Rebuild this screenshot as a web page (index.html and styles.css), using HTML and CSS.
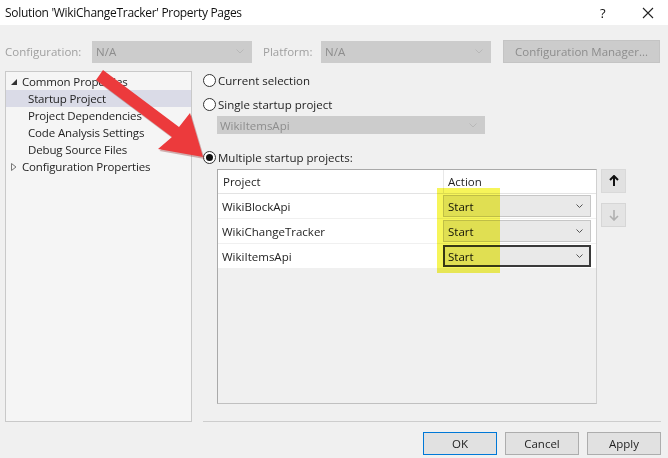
FILE: index.html
```html
<!DOCTYPE html>
<html>
<head>
<meta charset="utf-8">
<link rel="stylesheet" href="styles.css">
</head>
<body>
<div class="window">
  <div class="titlebar">
    <span class="title">Solution 'WikiChangeTracker' Property Pages</span>
    <span class="help">?</span>
    <span class="close"><svg width="12" height="12" viewBox="0 0 12 12"><path d="M1 1 L11 11 M11 1 L1 11" stroke="#222" stroke-width="1.1" fill="none"/></svg></span>
  </div>

  <div class="configrow">
    <span class="lbl lbl-config">Configuration:</span>
    <div class="combo combo-dis combo-config"><span>N/A</span><svg class="chev" width="8" height="5" viewBox="0 0 8 5"><path d="M0.5 0.5 L4 4 L7.5 0.5" stroke="#b8b8b8" fill="none"/></svg></div>
    <span class="lbl lbl-platform">Platform:</span>
    <div class="combo combo-dis combo-platform"><span>N/A</span><svg class="chev" width="8" height="5" viewBox="0 0 8 5"><path d="M0.5 0.5 L4 4 L7.5 0.5" stroke="#b8b8b8" fill="none"/></svg></div>
    <div class="btn-dis cfgmgr">Configuration Manager...</div>
  </div>

  <div class="main">
    <div class="tree">
      <div class="node"><svg class="tri" width="6" height="6" viewBox="0 0 6 6"><path d="M6 0 L6 6 L0 6 Z" fill="#333"/></svg><span>Common Properties</span></div>
      <div class="node child selected"><span>Startup Project</span></div>
      <div class="node child"><span>Project Dependencies</span></div>
      <div class="node child"><span>Code Analysis Settings</span></div>
      <div class="node child"><span>Debug Source Files</span></div>
      <div class="node"><svg class="tri" width="6" height="8" viewBox="0 0 6 8"><path d="M0.5 0.5 L5 4 L0.5 7.5 Z" fill="none" stroke="#777"/></svg><span>Configuration Properties</span></div>
    </div>

    <div class="content">
      <div class="radio-row r1"><span class="radio"></span><span>Current selection</span></div>
      <div class="radio-row r2"><span class="radio"></span><span>Single startup project</span></div>
      <div class="combo combo-dis combo-single"><span>WikiItemsApi</span><svg class="chev" width="8" height="5" viewBox="0 0 8 5"><path d="M0.5 0.5 L4 4 L7.5 0.5" stroke="#b8b8b8" fill="none"/></svg></div>
      <div class="radio-row r3"><span class="radio checked"></span><span>Multiple startup projects:</span></div>

      <div class="tablearea">
        <div class="grid">
          <div class="grow head">
            <div class="c1">Project</div>
            <div class="c2">Action</div>
          </div>
          <div class="grow">
            <div class="c1">WikiBlockApi</div>
            <div class="c2"><div class="acombo"><span>Start</span><svg class="chev" width="7" height="5" viewBox="0 0 7 5"><path d="M0.5 0.5 L3.5 3.5 L6.5 0.5" stroke="#555" fill="none"/></svg></div></div>
          </div>
          <div class="grow">
            <div class="c1">WikiChangeTracker</div>
            <div class="c2"><div class="acombo"><span>Start</span><svg class="chev" width="7" height="5" viewBox="0 0 7 5"><path d="M0.5 0.5 L3.5 3.5 L6.5 0.5" stroke="#555" fill="none"/></svg></div></div>
          </div>
          <div class="grow">
            <div class="c1">WikiItemsApi</div>
            <div class="c2"><div class="acombo focus"><span>Start</span><svg class="chev" width="7" height="5" viewBox="0 0 7 5"><path d="M0.5 0.5 L3.5 3.5 L6.5 0.5" stroke="#555" fill="none"/></svg></div></div>
          </div>
          <div class="highlight"></div>
        </div>
        <div class="movebtns">
          <div class="mbtn"><svg width="10" height="12" viewBox="0 0 10 12"><path d="M5 1 L5 11 M1 5 L5 1 L9 5" stroke="#111" stroke-width="2" fill="none"/></svg></div>
          <div class="mbtn dis"><svg width="10" height="12" viewBox="0 0 10 12"><path d="M5 1 L5 11 M1 7 L5 11 L9 7" stroke="#b0b0b0" stroke-width="1.6" fill="none"/></svg></div>
        </div>
      </div>
    </div>
  </div>

  <div class="footer">
    <div class="sep"></div>
    <div class="buttons">
      <div class="btn default">OK</div>
      <div class="btn">Cancel</div>
      <div class="btn">Apply</div>
    </div>
  </div>

  <svg class="arrow" width="668" height="458" viewBox="0 0 668 458">
    <g transform="translate(1.5,2)" fill="#8a2a2a" opacity="0.35">
      <path d="M96 80 L103 70 L179 127 L190 113 L203 157 L158 149 L172 137 Z"/>
    </g>
    <path d="M96 80 L103 70 L179 127 L190 113 L203 157 L158 149 L172 137 Z" fill="#ec3a3c"/>
  </svg>
</div>
</body>
</html>
```

FILE: styles.css
```css
* { box-sizing: border-box; }
html, body { margin: 0; padding: 0; }
body {
  width: 668px;
  height: 458px;
  overflow: hidden;
  background: #f0f0f0;
  font-family: "Open Sans", "Noto Sans", sans-serif;
  font-size: 11.5px;
  color: #1e1e1e;
}
.window { position: relative; width: 668px; height: 458px; }

.titlebar {
  height: 25px;
  background: #ffffff;
  display: flex;
  align-items: center;
  padding-left: 5px;
  font-size: 12px;
  color: #111;
}
.title { flex: 1; letter-spacing: -0.3px; }
.help { width: 20px; font-size: 13px; margin-right: 22px; }
.close { width: 26px; display: flex; align-items: center; }

.configrow {
  margin-top: 15px;
  height: 23px;
  display: flex;
  align-items: center;
  padding-left: 5px;
  color: #a0a0a0;
}
.lbl-config { width: 87px; }
.lbl-platform { width: 58px; margin-left: 11px; }
.combo {
  height: 22px;
  display: flex;
  align-items: center;
  justify-content: space-between;
  padding: 0 8px 0 4px;
}
.combo-dis { background: #cccccc; color: #8d8d8d; }
.combo-config { width: 160px; }
.combo-platform { width: 170px; }
.btn-dis.cfgmgr {
  margin-left: 12px;
  width: 157px;
  height: 23px;
  background: #cccccc;
  color: #8d8d8d;
  display: flex;
  align-items: center;
  justify-content: center;
  border: 1px solid #c4c4c4;
}

.main {
  margin-top: 8px;
  display: flex;
  padding-left: 5px;
}
.tree {
  width: 187px;
  height: 351px;
  background: #f5f5f5;
  border: 1px solid #c9c9c9;
  padding-top: 1px;
  letter-spacing: -0.15px;
}
.node {
  height: 17px;
  display: flex;
  align-items: center;
  padding-left: 4px;
  white-space: nowrap;
  overflow: hidden;
}
.node .tri { width: 8px; margin-right: 4px; }
.node.child { padding-left: 22px; }
.node.selected { background: #dadbe7; }

.content {
  margin-left: 11px;
  width: 458px;
}
.radio-row {
  height: 16px;
  display: flex;
  align-items: center;
}
.radio {
  width: 13px;
  height: 13px;
  border: 1px solid #333;
  border-radius: 50%;
  background: #fff;
  margin-right: 2px;
  position: relative;
}
.radio.checked::after {
  content: "";
  position: absolute;
  left: 2px;
  top: 2px;
  width: 7px;
  height: 7px;
  border-radius: 50%;
  background: #111;
}
.r1 { margin-top: 1px; }
.r2 { margin-top: 8px; }
.combo-single {
  margin-top: 4px;
  margin-left: 14px;
  width: 268px;
  height: 18px;
  padding-left: 3px;
}
.r3 { margin-top: 15px; }

.tablearea {
  margin-top: 4px;
  margin-left: 14px;
  display: flex;
  align-items: flex-start;
}
.grid {
  position: relative;
  width: 380px;
  height: 235px;
  border: 1px solid #a9a9a9;
  border-bottom-color: #c0c0c0;
  border-right-color: #d0d0d0;
  background: #f0f0f0;
}
.grow {
  display: flex;
  height: 25px;
  background: #fff;
  border-bottom: 1px solid #f0f0f0;
}
.grow.head {
  height: 24px;
  border-bottom: 1px solid #e3e3e3;
}
.c1 {
  width: 225px;
  padding-left: 4px;
  display: flex;
  align-items: center;
}
.c2 {
  flex: 1;
  display: flex;
  align-items: center;
}
.head .c1 { padding-left: 5px; }
.head .c2 {
  border-left: 1px solid #e8e8e8;
  padding-left: 4px;
}
.acombo {
  width: 148px;
  height: 22px;
  background: #e9e9e9;
  border: 1px solid #c6c6c6;
  display: flex;
  align-items: center;
  justify-content: space-between;
  padding: 0 7px 0 4px;
  color: #111;
}
.acombo.focus { border: 2px solid #3a3a3a; padding-left: 3px; padding-right: 6px; }
.highlight {
  position: absolute;
  left: 219px;
  top: 18px;
  width: 63px;
  height: 85px;
  background: #f6f55a;
  mix-blend-mode: multiply;
}
.movebtns {
  margin-left: 4px;
  display: flex;
  flex-direction: column;
  gap: 10px;
}
.mbtn {
  width: 25px;
  height: 24px;
  background: #e1e1e1;
  border: 1px solid #d9d9d9;
  display: flex;
  align-items: center;
  justify-content: center;
}
.mbtn.dis { background: #e4e4e4; border-color: #d6d6d6; }

.footer { padding-left: 203px; }
.sep {
  height: 1px;
  width: 458px;
  background: #cdcdcd;
  margin-top: -1px;
}
.buttons {
  margin-top: 10px;
  display: flex;
  justify-content: flex-end;
  gap: 8px;
  width: 458px;
}
.btn {
  width: 74px;
  height: 23px;
  background: #e1e1e1;
  border: 1px solid #adadad;
  display: flex;
  align-items: center;
  justify-content: center;
}
.btn.default { border: 1px solid #0078d7; }

.arrow { position: absolute; left: 0; top: 0; pointer-events: none; }
```
